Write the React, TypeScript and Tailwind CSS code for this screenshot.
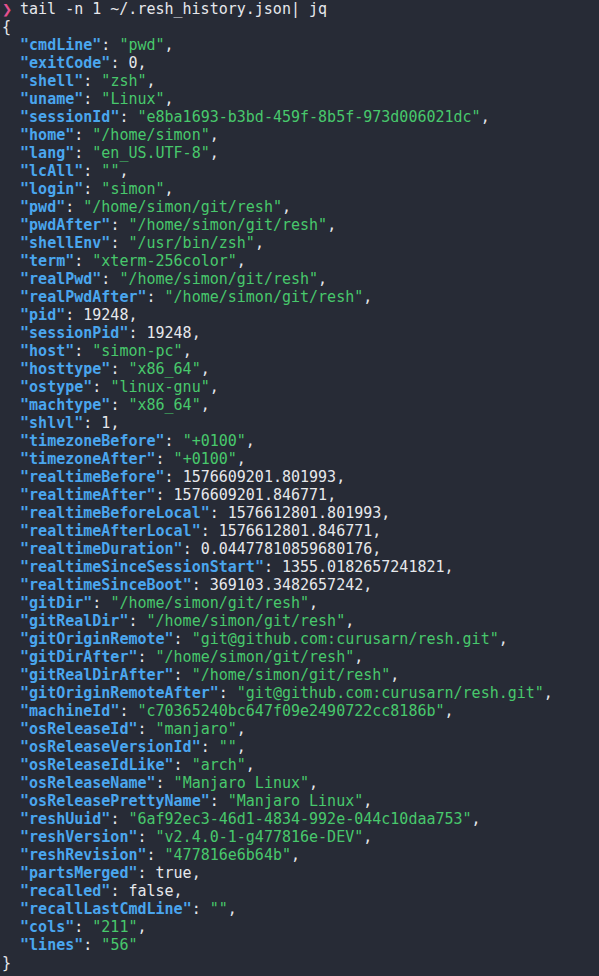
const entries: [string, string, "s" | "n"][] = [
  ["cmdLine", "pwd", "s"],
  ["exitCode", "0", "n"],
  ["shell", "zsh", "s"],
  ["uname", "Linux", "s"],
  ["sessionId", "e8ba1693-b3bd-459f-8b5f-973d006021dc", "s"],
  ["home", "/home/simon", "s"],
  ["lang", "en_US.UTF-8", "s"],
  ["lcAll", "", "s"],
  ["login", "simon", "s"],
  ["pwd", "/home/simon/git/resh", "s"],
  ["pwdAfter", "/home/simon/git/resh", "s"],
  ["shellEnv", "/usr/bin/zsh", "s"],
  ["term", "xterm-256color", "s"],
  ["realPwd", "/home/simon/git/resh", "s"],
  ["realPwdAfter", "/home/simon/git/resh", "s"],
  ["pid", "19248", "n"],
  ["sessionPid", "19248", "n"],
  ["host", "simon-pc", "s"],
  ["hosttype", "x86_64", "s"],
  ["ostype", "linux-gnu", "s"],
  ["machtype", "x86_64", "s"],
  ["shlvl", "1", "n"],
  ["timezoneBefore", "+0100", "s"],
  ["timezoneAfter", "+0100", "s"],
  ["realtimeBefore", "1576609201.801993", "n"],
  ["realtimeAfter", "1576609201.846771", "n"],
  ["realtimeBeforeLocal", "1576612801.801993", "n"],
  ["realtimeAfterLocal", "1576612801.846771", "n"],
  ["realtimeDuration", "0.04477810859680176", "n"],
  ["realtimeSinceSessionStart", "1355.0182657241821", "n"],
  ["realtimeSinceBoot", "369103.3482657242", "n"],
  ["gitDir", "/home/simon/git/resh", "s"],
  ["gitRealDir", "/home/simon/git/resh", "s"],
  ["gitOriginRemote", "git@github.com:curusarn/resh.git", "s"],
  ["gitDirAfter", "/home/simon/git/resh", "s"],
  ["gitRealDirAfter", "/home/simon/git/resh", "s"],
  ["gitOriginRemoteAfter", "git@github.com:curusarn/resh.git", "s"],
  ["machineId", "c70365240bc647f09e2490722cc8186b", "s"],
  ["osReleaseId", "manjaro", "s"],
  ["osReleaseVersionId", "", "s"],
  ["osReleaseIdLike", "arch", "s"],
  ["osReleaseName", "Manjaro Linux", "s"],
  ["osReleasePrettyName", "Manjaro Linux", "s"],
  ["reshUuid", "6af92ec3-46d1-4834-992e-044c10daa753", "s"],
  ["reshVersion", "v2.4.0-1-g477816e-DEV", "s"],
  ["reshRevision", "477816e6b64b", "s"],
  ["partsMerged", "true", "n"],
  ["recalled", "false", "n"],
  ["recallLastCmdLine", "", "s"],
  ["cols", "211", "s"],
  ["lines", "56", "s"],
];

export default function App() {
  return (
    <div className="w-[599px] h-[976px] overflow-hidden bg-[#272b36] text-[#e6e8ec] font-['DejaVu_Sans_Mono',monospace] text-[15px] leading-[18px] pl-[2px] whitespace-pre">
      <div className="flex">
        <span className="w-[18px] text-[#e2508f] font-bold text-[17px] leading-[18px]">❯</span>
        <span>tail -n 1 ~/.resh_history.json| jq</span>
      </div>
      <div>{"{"}</div>
      {entries.map(([key, value, kind], i) => (
        <div key={key}>
          {"  "}
          <span className="text-[#4aa6ee] font-bold">"{key}"</span>
          <span>: </span>
          {kind === "s" ? (
            <span className="text-[#48c86c]">"{value}"</span>
          ) : (
            <span>{value}</span>
          )}
          {i < entries.length - 1 ? "," : ""}
        </div>
      ))}
      <div>{"}"}</div>
    </div>
  );
}
